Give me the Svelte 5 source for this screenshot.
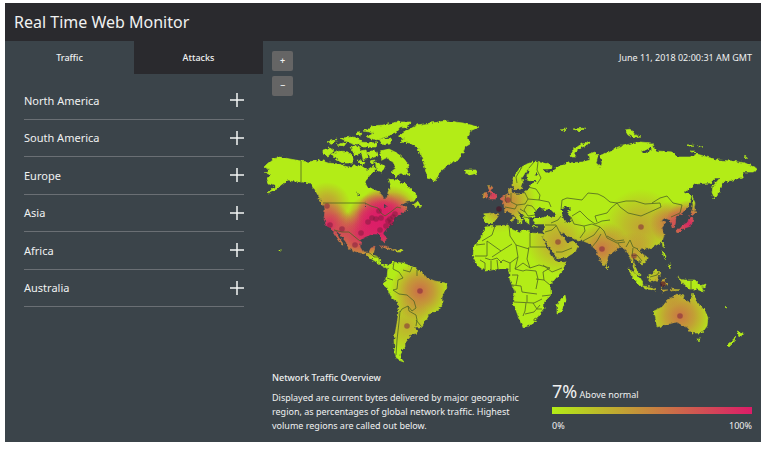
<script lang="ts">
  /**
   * Real time web monitor
   *
   * Region list on the left, world heat map on the right,
   * with a traffic summary under the map.
   */

  interface Hotspot {
    x: number
    y: number
    r: number
    heat: number
  }

  const tabs = ['Traffic', 'Attacks']
  const regions = ['North America', 'South America', 'Europe', 'Asia', 'Africa', 'Australia']

  // Glow around the busiest places
  const hotspots: Hotspot[] = [
    { x: 327, y: 206, r: 24, heat: 0.45 },
    { x: 328, y: 225, r: 24, heat: 1 },
    { x: 342, y: 231, r: 20, heat: 0.5 },
    { x: 355, y: 245, r: 24, heat: 0.45 },
    { x: 361, y: 234, r: 26, heat: 0.9 },
    { x: 372, y: 220, r: 26, heat: 1 },
    { x: 379, y: 212, r: 22, heat: 0.8 },
    { x: 388, y: 219, r: 34, heat: 1 },
    { x: 384, y: 230, r: 30, heat: 1 },
    { x: 394, y: 214, r: 22, heat: 0.7 },
    { x: 420, y: 291, r: 30, heat: 0.65 },
    { x: 407, y: 326, r: 28, heat: 0.3 },
    { x: 493, y: 195, r: 16, heat: 0.85 },
    { x: 508, y: 200, r: 28, heat: 0.45 },
    { x: 500, y: 209, r: 24, heat: 0.25 },
    { x: 558, y: 242, r: 32, heat: 0.38 },
    { x: 602, y: 249, r: 28, heat: 0.6 },
    { x: 641, y: 227, r: 38, heat: 0.36 },
    { x: 634, y: 256, r: 24, heat: 0.3 },
    { x: 672, y: 223, r: 22, heat: 0.6 },
    { x: 689, y: 224, r: 24, heat: 1 },
    { x: 663, y: 284, r: 24, heat: 0.4 },
    { x: 680, y: 316, r: 32, heat: 0.6 },
  ]

  const dots: [number, number][] = [
    [327, 206], [330, 225], [342, 229], [355, 245], [361, 233], [368, 222],
    [372, 218], [376, 219], [379, 211], [381, 218], [380, 230], [386, 226],
    [388, 221], [390, 219], [393, 217], [395, 214], [391, 223], [420, 291],
    [407, 326], [508, 200], [558, 242], [602, 249], [641, 227], [634, 256], [680, 316],
  ]

  const seaDots: [number, number][] = [[499, 209], [663, 284]]

  const land = [
    // North and Central America
    'M267 164 L273 159 280 157 290 159 301 161 308 162 320 160 328 163 338 164 348 167 360 165 367 170 373 166 376 169 370 175 365 182 367 187 375 190 381 193 384 199 387 199 388 192 391 186 389 179 397 180 402 184 405 183 410 188 417 196 414 201 407 202 400 205 405 206 407 209 402 213 397 216 393 222 387 228 383 233 386 240 383 242 380 234 372 234 367 236 361 239 360 247 363 252 369 252 371 248 375 247 373 255 379 257 380 263 387 266 390 265 388 268 384 267 378 263 370 258 366 254 357 252 349 249 346 242 339 233 335 230 339 238 344 245 342 245 336 236 331 228 327 226 324 219 325 210 323 202 319 197 315 190 310 183 302 182 293 181 288 180 282 185 277 189 268 193 275 186 269 184 267 178 272 175 265 172 270 169 264 167Z',
    'M317 198 L324 203 326 205 322 204Z',
    // Arctic islands
    'M323 150 L330 148 334 151 328 156 323 154Z',
    'M332 154 L340 151 348 152 354 158 352 163 344 163 336 160Z',
    'M327 142 L337 139 333 144Z M336 145 L347 142 344 146Z M340 138 L353 137 362 141 356 145 348 142Z M350 147 L359 146 361 153 355 155Z M361 151 L366 150 368 158 363 160Z M357 160 L365 162 363 166Z M367 153 L375 150 378 156 371 158Z M358 142 L378 143 376 147 362 147Z',
    'M364 131 L373 126 383 125 398 122 411 122 408 127 400 128 396 133 385 137 376 140 367 137 374 133Z M379 139 L391 138 390 144 383 145Z M355 134 L362 132 361 136Z',
    'M380 151 L389 149 397 153 404 159 409 165 407 169 409 175 401 174 396 177 391 172 396 168 393 162 386 158 382 160Z M375 162 L385 166 382 172 377 170Z M369 161 L375 160 373 165Z',
    'M417 202 L422 206 416 207 413 205Z M380 246 L386 246 392 250 397 251 388 249Z M396 250 L403 250 402 252 397 252Z',
    // Greenland and Iceland
    'M397 137 L405 132 417 125 430 123 447 121 463 123 479 127 470 131 468 138 470 144 465 147 463 153 458 160 450 163 440 172 435 181 428 178 425 168 422 158 418 148 410 143 400 142 405 138Z',
    'M465 170 L476 170 477 173 470 175 466 173Z',
    // South America
    'M390 265 L393 262 403 263 413 267 423 273 427 278 435 281 445 283 447 287 442 297 442 305 438 310 430 313 425 322 422 327 415 327 417 333 410 335 409 338 405 343 405 347 402 350 400 357 404 362 398 360 395 355 394 340 397 323 399 310 398 302 392 298 387 288 384 283 387 277 388 268Z',
    // Africa
    'M485 227 L495 226 508 225 511 229 520 233 523 230 532 233 542 234 543 240 547 248 552 256 557 262 566 261 563 270 555 279 550 285 551 295 544 302 544 308 540 313 535 322 529 326 523 327 521 323 517 313 513 302 515 292 510 280 509 272 507 268 497 269 485 271 477 265 473 257 474 247 482 237Z',
    'M565 295 L566 300 561 312 557 313 557 305 560 300Z',
    // Western Europe
    'M484 214 L490 213 499 215 497 218 493 223 488 224 485 222Z',
    'M488 187 L492 186 491 190 495 194 498 197 496 199 489 199 491 194Z M484 193 L488 192 487 198 483 198Z',
    // Europe and Asia
    'M501 198 L505 195 509 194 508 190 511 188 512 193 518 194 525 193 527 188 530 183 533 182 527 180 527 175 530 171 528 169 525 173 522 178 523 183 521 189 517 190 513 189 513 178 520 168 527 164 535 161 542 162 552 166 551 169 543 169 546 173 552 171 557 167 567 163 583 162 590 160 589 154 595 152 598 155 596 163 601 167 602 163 600 155 610 152 618 147 630 144 640 142 652 143 653 148 658 151 672 152 677 157 690 157 697 154 707 157 718 160 732 161 745 163 758 169 753 172 743 172 743 177 733 180 723 182 721 187 718 195 714 199 712 192 713 186 720 178 715 178 710 183 695 184 688 190 684 192 691 196 689 205 682 213 676 216 675 226 672 227 670 220 665 218 660 221 665 223 662 228 664 235 662 242 653 247 647 249 642 248 640 252 647 257 646 262 642 264 637 260 633 258 633 263 638 272 640 276 635 272 632 263 628 254 625 248 620 247 613 252 608 256 607 262 604 266 601 262 597 252 594 248 588 243 583 241 575 239 570 237 565 234 559 231 563 237 567 243 573 241 578 246 575 252 567 257 557 259 555 255 550 248 545 240 543 235 545 228 545 224 536 224 533 220 536 217 529 217 529 224 525 221 523 215 517 210 520 216 524 220 519 221 513 214 507 211 505 213 504 205Z',
    'M518 222 L522 222 521 224Z M512 217 L514 217 513 221 511 220Z M532 226 L537 227 533 227Z',
    'M570 156 L573 150 580 145 591 141 589 144 580 148 574 153 576 157 571 157Z M560 130 L566 129 564 131Z M573 129 L586 128 579 131Z',
    'M625 130 L631 129 635 135 641 137 634 138 628 135Z M687 145 L694 144 692 147Z M697 146 L704 147 699 147Z M690 151 L696 151 695 153Z M744 157 L748 156 747 158Z',
    // Japan and Sakhalin
    'M692 196 L695 203 694 208 696 210 692 211 693 205Z M691 211 L697 212 693 216Z M690 216 L693 219 691 226 685 228 679 230 683 225 689 222Z M677 229 L682 229 678 233Z',
    // South-east Asia
    'M628 269 L632 270 637 275 643 283 642 287 635 280Z M643 286 L652 287 656 290 645 289Z M647 277 L652 274 657 269 660 272 658 280 651 282Z M662 280 L666 279 664 281 668 285 663 285 661 288Z M662 241 L665 244 663 247Z M662 251 L666 256 665 259Z M667 265 L671 264 670 269Z M606 264 L609 267 607 269Z',
    'M677 277 L683 280 695 280 701 286 704 292 696 289 688 289Z M671 289 L681 290 674 291Z M660 290 L667 290 662 292Z M701 286 L706 284 705 287Z',
    // Australia and New Zealand
    'M654 311 L662 307 668 300 677 294 684 296 683 299 690 303 693 293 697 302 705 311 708 318 707 326 702 333 692 333 687 327 682 325 677 322 668 324 657 327 656 320Z',
    'M697 338 L701 338 699 342Z M737 331 L743 333 740 338Z M736 337 L733 343 729 347 727 345Z M725 306 L727 308 724 307Z M280 250 L281 250 281 251 280 251Z',
  ]

  const water = [
    'M535 212 L539 208 545 210 550 209 555 214 555 217 547 216 540 218 534 218Z',
    'M562 208 L568 206 571 209 567 213 571 218 569 224 564 220 562 214Z',
    'M524 187 L530 181 537 181 531 184 528 190 522 192Z',
    'M384 204 L387 206 384 207Z M365 202 L366 207 365 207Z M357 192 L359 196 358 196Z',
    'M553 168 L549 173 545 171Z M642 152 L652 147 652 149 644 154Z',
    'M534 175 L537 172 538 176Z',
  ]

  const borders = [
    // Americas
    'M301 161 V182 M323 203 H365 L371 206 378 208 381 213 385 216 392 211 397 207 401 208 M334 230 L342 232 349 232 355 237 360 241 M368 252 L371 254 374 257 379 257',
    'M394 262 L393 269 399 272 403 278 398 280 397 289 393 290 399 294 407 295 414 301 416 308 412 311 408 306 402 309 400 312 M387 278 L393 280 M403 270 L410 272 412 267 M417 270 L417 276 M400 311 L399 322 397 340 396 355 M408 306 L409 311 416 315 417 320 416 326 M421 326 L416 320',
    // Africa
    'M485 244 L476 245 M487 241 L501 251 512 244 M487 241 V256 H475 M495 226 L492 235 482 241 M509 226 L510 236 516 245 529 249 M530 233 V247 H546 M516 245 L518 257 510 263 503 260 500 263 M518 257 L515 269 523 263 530 268 539 265 550 268 M529 247 L527 259 530 268 M492 257 L501 251 M485 258 L491 260 497 258 502 263 M480 260 L485 263 485 270 M491 261 V270 M497 260 L498 269 M510 263 L510 272',
    'M515 269 L523 271 526 270 536 271 538 279 536 289 M512 275 L518 275 516 285 M512 285 L521 286 522 292 529 293 537 294 M536 279 L544 280 550 285 M544 280 L543 272 550 268 M551 295 L542 296 M514 302 L534 303 542 299 M526 303 L525 311 523 316 M525 314 L534 312 540 305 M527 295 L527 302 M533 303 L537 309 542 309 M534 319 L536 318 537 320 534 321Z M543 265 L552 272 562 268',
    // Europe
    'M538 162 L537 170 541 178 537 184 M534 162 L529 168 M522 167 L516 177 517 183 M525 193 L528 199 525 204 517 205 511 202 511 193 M528 187 L536 189 540 195 539 200 528 199 M539 200 L549 202 551 207 M527 205 L532 206 537 212 M517 205 L515 209 505 207 M527 205 L524 210 528 216 535 215 M520 209 L525 212 M524 217 L530 218 M506 195 L505 200 507 203',
    // Asia
    'M551 223 L558 220 561 216 M545 225 L556 225 561 235 M545 232 L552 230 556 226 M556 252 L562 252 572 248 M562 215 L571 217 574 224 584 226 585 231 580 238 M561 210 L562 200 567 198 582 200 588 193 598 194 604 197 610 202 617 203 M572 216 L580 211 588 219 595 224 602 221 610 220 M584 226 L592 224 600 227 594 235 583 241 M597 222 L595 216 607 213 611 208 617 203 M600 227 L604 231 607 238 617 243 625 242 M607 236 L616 241 624 240 M617 203 L626 201 635 201 645 204 660 203 661 207 650 212 641 216 628 213 620 207 617 203 M652 203 L660 198 667 196 673 203 682 205 680 213 671 217 M592 247 L597 241 601 234 M620 247 L618 243 M626 247 L630 240 633 247 638 249 M633 248 L632 256 637 255 642 261 M637 249 L642 254 M650 277 L657 275 659 272 M691 281 V289',
  ]

  let activeTab = $state('Traffic')
  let openRegion = $state('')
  let zoom = $state(1)

  // Zoom about the middle of the map
  let transform = $derived(`translate(512 204) scale(${zoom}) translate(-512 -204)`)

  function toggleRegion(name: string) {
    openRegion = openRegion === name ? '' : name
  }
</script>

<main class="monitor">
  <header class="title-bar">
    <h1>Real Time Web Monitor</h1>
  </header>

  <div class="columns">
    <aside class="sidebar">
      <div class="tabs" role="tablist">
        {#each tabs as tab}
          <button
            class="tab"
            class:active={activeTab === tab}
            role="tab"
            aria-selected={activeTab === tab}
            onclick={() => (activeTab = tab)}
          >
            {tab}
          </button>
        {/each}
      </div>

      <ul class="regions">
        {#each regions as region}
          <li>
            <button
              class="region"
              aria-expanded={openRegion === region}
              onclick={() => toggleRegion(region)}
            >
              <span>{region}</span>
              <svg class="plus" viewBox="0 0 14 14" aria-hidden="true">
                <path d={openRegion === region ? 'M0 7H14' : 'M0 7H14M7 0V14'} />
              </svg>
            </button>
          </li>
        {/each}
      </ul>
    </aside>

    <section class="content">
      <div class="map-area">
        <svg class="map" viewBox="263 41 498 325" role="img">
          <defs>
            <radialGradient id="glow">
              <stop offset="0" stop-color="#dc1c68" stop-opacity="0.95" />
              <stop offset="0.45" stop-color="#dc1c68" stop-opacity="0.6" />
              <stop offset="1" stop-color="#dc1c68" stop-opacity="0" />
            </radialGradient>
            <!-- Ragged coastlines -->
            <filter
              id="coast"
              x="263"
              y="110"
              width="498"
              height="256"
              filterUnits="userSpaceOnUse"
              color-interpolation-filters="sRGB"
            >
              <feTurbulence type="fractalNoise" baseFrequency="0.3" numOctaves="2" seed="4" />
              <feDisplacementMap in="SourceGraphic" scale="4" xChannelSelector="R" yChannelSelector="G" />
            </filter>
            <mask id="land" x="263" y="110" width="498" height="256" maskUnits="userSpaceOnUse">
              <g filter="url(#coast)">
                {#each land as d}
                  <path class="land" {d} />
                {/each}
                {#each water as d}
                  <path {d} fill="#000" />
                {/each}
              </g>
            </mask>
          </defs>

          <g {transform}>
            <g mask="url(#land)">
              <rect x="263" y="110" width="498" height="256" fill="#b3ec17" />
              {#each hotspots as spot}
                <circle cx={spot.x} cy={spot.y} r={spot.r} fill="url(#glow)" opacity={spot.heat} />
              {/each}
              {#each borders as d}
                <path class="border" {d} />
              {/each}
            </g>
            {#each dots as [x, y]}
              <circle class="dot" cx={x} cy={y} r="2.8" />
            {/each}
            {#each seaDots as [x, y]}
              <circle class="dot sea" cx={x} cy={y} r="2.8" />
            {/each}
          </g>
        </svg>

        <div class="zoom">
          <button aria-label="Zoom in" onclick={() => (zoom = Math.min(zoom + 0.5, 4))}>+</button>
          <button aria-label="Zoom out" onclick={() => (zoom = Math.max(zoom - 0.5, 1))}>−</button>
        </div>
        <time class="timestamp" datetime="2018-06-11T02:00:31Z">June 11, 2018 02:00:31 AM GMT</time>
      </div>

      <div class="summary">
        <div class="overview">
          <h2>Network Traffic Overview</h2>
          <p>
            Displayed are current bytes delivered by major geographic region, as percentages of
            global network traffic. Highest volume regions are called out below.
          </p>
        </div>
        <div class="gauge">
          <p class="level"><strong>7%</strong> Above normal</p>
          <div class="scale"></div>
          <div class="scale-ends"><span>0%</span><span>100%</span></div>
        </div>
      </div>
    </section>
  </div>
</main>

<style>
  :global(body) {
    margin: 0;
    background: #fff;
  }

  .monitor {
    margin: 3px 7px 11px 5px;
    background: #3b444a;
    color: #f0f1f1;
    font-family: 'Noto Sans', sans-serif;
    font-size: 9px;
  }

  button {
    padding: 0;
    border: none;
    background: transparent;
    color: inherit;
    font: inherit;
    cursor: pointer;
  }

  h1,
  h2,
  p,
  ul {
    margin: 0;
    padding: 0;
  }

  .title-bar {
    padding: 0 9px;
    background: #2a2a2e;
  }

  h1 {
    font-size: 16px;
    font-weight: 400;
    line-height: 38px;
  }

  .columns {
    display: grid;
    grid-template-columns: 258px 1fr;
  }

  .tabs {
    display: grid;
    grid-template-columns: 1fr 1fr;
  }

  .tab {
    height: 33px;
    background: #2a2a2e;
    font-weight: 500;
  }

  .tab.active {
    background: transparent;
  }

  .regions {
    display: grid;
    grid-auto-rows: 1fr;
    height: 225px;
    margin: 8px 19px 0;
    list-style: none;
  }

  .regions li {
    display: flex;
    border-bottom: 1px solid #6a6f74;
  }

  .region {
    display: flex;
    flex: 1;
    align-items: center;
    justify-content: space-between;
    font-size: 11px;
  }

  .plus {
    width: 14px;
    height: 14px;
    fill: none;
    stroke: #f4f5f5;
    stroke-width: 1.5;
  }

  .map-area {
    position: relative;
  }

  .map {
    display: block;
    width: 100%;
    overflow: hidden;
  }

  .land {
    fill: #fff;
    stroke: #fff;
    stroke-width: 0.6;
  }

  .border {
    fill: none;
    stroke: #4e6424;
    stroke-width: 0.8;
    stroke-linejoin: round;
  }

  .dot {
    fill: #7a1c3c;
    fill-opacity: 0.5;
  }

  .dot.sea {
    fill: #4c1626;
    fill-opacity: 0.7;
  }

  .zoom {
    position: absolute;
    top: 10px;
    left: 9px;
    display: grid;
    gap: 5px;
  }

  .zoom button {
    width: 21px;
    height: 20px;
    border-radius: 2px;
    background: #656565;
    font-size: 9px;
    font-weight: 600;
    line-height: 20px;
  }

  .timestamp {
    position: absolute;
    top: 10px;
    right: 9px;
    line-height: 14px;
  }

  .summary {
    display: flex;
    justify-content: space-between;
    padding: 5px 9px 9px;
    line-height: 14px;
  }

  .overview {
    width: 250px;
  }

  h2 {
    margin-bottom: 6px;
    font-size: 9px;
    font-weight: 500;
  }

  .gauge {
    width: 200px;
    padding-top: 8px;
  }

  .level {
    line-height: 24px;
  }

  .level strong {
    font-size: 18px;
    font-weight: 400;
  }

  .scale {
    height: 7px;
    margin-bottom: 5px;
    background: linear-gradient(to right, #b3ec17, #dc1c68);
  }

  .scale-ends {
    display: flex;
    justify-content: space-between;
  }
</style>
